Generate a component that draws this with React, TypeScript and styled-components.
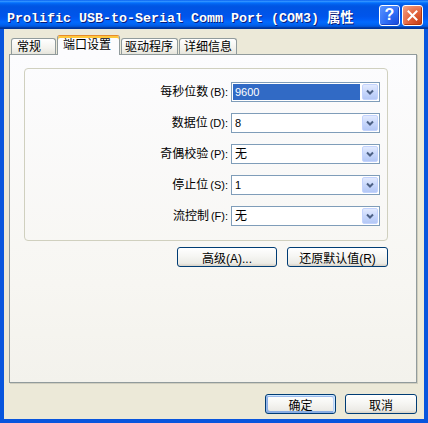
import React from "react";
import styled, { createGlobalStyle, css } from "styled-components";

const GlobalStyle = createGlobalStyle`
  html, body { margin: 0; padding: 0; background: #ECE9D8; }
  body {
    font-family: "Liberation Sans", "Noto Sans CJK SC", sans-serif;
    font-size: 12px;
    color: #000;
  }
  * { box-sizing: border-box; }
`;

const Window = styled.div`
  width: 428px;
  height: 423px;
  display: flex;
  flex-direction: column;
  overflow: hidden;
`;

const TitleBar = styled.div`
  height: 29px;
  flex: none;
  display: flex;
  align-items: center;
  padding: 1px 5px 0 7px;
  background: linear-gradient(
    180deg,
    #0058ee 0%,
    #3593ff 4%,
    #288eff 6%,
    #127dff 8%,
    #036ffc 10%,
    #0262ee 14%,
    #0057e5 20%,
    #0054e3 24%,
    #0055eb 56%,
    #005bf5 66%,
    #026afe 76%,
    #0062ef 86%,
    #0052d6 92%,
    #0040ab 94%,
    #003092 100%
  );
`;

const TitleText = styled.div`
  flex: 1;
  color: #fff;
  font-family: "Liberation Mono", "Noto Sans CJK SC", monospace;
  font-weight: bold;
  font-size: 13.33px;
  white-space: nowrap;
  text-shadow: 1px 1px #0a1c7a;
  padding-top: 2px;
`;

const CaptionButtons = styled.div`
  display: flex;
  gap: 2px;
`;

const CaptionButton = styled.div<{ $kind: "help" | "close" }>`
  width: 21px;
  height: 21px;
  border: 1px solid #fff;
  border-radius: 3px;
  display: flex;
  align-items: center;
  justify-content: center;
  color: #fff;
  font-family: "Liberation Sans", sans-serif;
  font-weight: bold;
  font-size: 16px;
  ${(p) =>
    p.$kind === "help"
      ? css`
          background: radial-gradient(circle at 85% 90%, #1b4fe0 0%, #2f6ef6 45%, #5c95ff 100%);
          box-shadow: inset -1px -1px 0 #1a44c8;
        `
      : css`
          background: radial-gradient(circle at 85% 90%, #c8421b 0%, #e2613a 45%, #f2a58a 100%);
          box-shadow: inset -1px -1px 0 #b0380f;
        `}
`;

const Body = styled.div`
  flex: 1;
  display: flex;
  flex-direction: column;
  background: #ece9d8;
  border: 4px solid #0855dd;
  border-top: none;
  padding: 5px 7px 0 5px;
`;

const TabStrip = styled.div`
  height: 20px;
  flex: none;
  display: flex;
  align-items: flex-end;
  gap: 1px;
  padding-left: 2px;
  position: relative;
  z-index: 1;
`;

const Tab = styled.div<{ $active?: boolean; $w: number; $pl: number }>`
  width: ${(p) => p.$w}px;
  padding-left: ${(p) => p.$pl}px;
  border: 1px solid #919b9c;
  border-bottom: none;
  border-radius: 3px 3px 0 0;
  white-space: nowrap;
  font-size: 12px;
  ${(p) =>
    p.$active
      ? css`
          height: 20px;
          margin-bottom: -1px;
          background: #fcfcfe;
          border-top-color: #e68b2c;
          box-shadow: inset 0 2px 0 #ffc83c;
          line-height: 18px;
          padding-top: 0;
        `
      : css`
          height: 16px;
          background: linear-gradient(180deg, #ffffff 0%, #f4f3ee 60%, #e6e5dc 100%);
          line-height: 17px;
        `}
`;

const Panel = styled.div`
  width: 408px;
  height: 329px;
  flex: none;
  border: 1px solid #919b9c;
  background: linear-gradient(180deg, #fcfcfe 0%, #f7f6f2 70%, #f3f2ec 100%);
  box-shadow: 1px 1px 0 #d0cebf;
  padding: 13px 0 0 14px;
`;

const Frame = styled.div`
  width: 364px;
  height: 173px;
  border: 1px solid #d0d0bf;
  border-radius: 4px;
  padding-top: 13px;
  display: grid;
  grid-template-columns: 203px 149px;
  column-gap: 3px;
  row-gap: 11px;
  align-content: start;
`;

const Label = styled.div`
  text-align: right;
  line-height: 20px;
  height: 20px;
  white-space: nowrap;
  font-size: 12px;
`;

const Key = styled.span`
  margin-left: 2px;
  font-size: 11px;
`;

const Combo = styled.div`
  height: 20px;
  border: 1px solid #7f9db9;
  background: #fff;
  display: flex;
  align-items: center;
  padding: 1px;
`;

const ComboValue = styled.div<{ $selected?: boolean }>`
  flex: 1;
  height: 16px;
  line-height: 16px;
  padding-left: 2px;
  margin-right: 2px;
  font-size: 11px;
  white-space: nowrap;
  ${(p) =>
    p.$selected &&
    css`
      background: #316ac5;
      color: #fff;
    `}
`;

const CjkValue = styled.span`
  font-size: 12px;
`;

const DropButton = styled.div`
  width: 16px;
  height: 16px;
  flex: none;
  border: 1px solid #c3d3fd;
  border-radius: 2px;
  background: linear-gradient(180deg, #e2eafe 0%, #c6d6fb 55%, #b4c8f6 100%);
  display: flex;
  align-items: center;
  justify-content: center;
`;

const ButtonRow = styled.div<{ $gap: number; $mt: number }>`
  display: flex;
  justify-content: flex-end;
  gap: ${(p) => p.$gap}px;
  margin-top: ${(p) => p.$mt}px;
`;

const InnerRow = styled(ButtonRow)`
  width: 364px;
`;

const XPButton = styled.div<{ $w: number; $default?: boolean }>`
  width: ${(p) => p.$w}px;
  height: 20px;
  border: 1px solid #003c74;
  border-radius: 3px;
  background: linear-gradient(180deg, #ffffff 0%, #f6f6f3 45%, #ecebe6 85%, #d6d0c5 100%);
  display: flex;
  align-items: center;
  justify-content: center;
  font-size: 12px;
  white-space: nowrap;
  ${(p) =>
    p.$default &&
    css`
      box-shadow: inset -1px 1px #cee7ff, inset 1px 2px #98b8ea, inset -2px 2px #bcd4f6,
        inset 1px -1px #89ade4, inset 2px -2px #89ade4;
    `}
`;

const Chevron = () => (
  <svg width="8" height="6" viewBox="0 0 8 6">
    <polyline points="1,1.5 4,4.5 7,1.5" fill="none" stroke="#4d6185" strokeWidth="2" />
  </svg>
);

const CloseGlyph = () => (
  <svg width="11" height="11" viewBox="0 0 11 11">
    <path d="M1.5 1.5 L9.5 9.5 M9.5 1.5 L1.5 9.5" stroke="#fff" strokeWidth="2" strokeLinecap="square" />
  </svg>
);

type Row = { label: string; key: string; value: string; cjk?: boolean; selected?: boolean };

const rows: Row[] = [
  { label: "每秒位数", key: "(B):", value: "9600", selected: true },
  { label: "数据位", key: "(D):", value: "8" },
  { label: "奇偶校验", key: "(P):", value: "无", cjk: true },
  { label: "停止位", key: "(S):", value: "1" },
  { label: "流控制", key: "(F):", value: "无", cjk: true },
];

const tabs = [
  { text: "常规", w: 45, pl: 5 },
  { text: "端口设置", w: 63, pl: 5, active: true },
  { text: "驱动程序", w: 57, pl: 3 },
  { text: "详细信息", w: 58, pl: 4 },
];

export default function App() {
  return (
    <>
      <GlobalStyle />
      <Window>
        <TitleBar>
          <TitleText>Prolific USB-to-Serial Comm Port (COM3) 属性</TitleText>
          <CaptionButtons>
            <CaptionButton $kind="help">?</CaptionButton>
            <CaptionButton $kind="close">
              <CloseGlyph />
            </CaptionButton>
          </CaptionButtons>
        </TitleBar>
        <Body>
          <TabStrip>
            {tabs.map((t) => (
              <Tab key={t.text} $w={t.w} $pl={t.pl} $active={t.active}>
                {t.text}
              </Tab>
            ))}
          </TabStrip>
          <Panel>
            <Frame>
              {rows.map((r) => (
                <React.Fragment key={r.label}>
                  <Label>
                    {r.label}
                    <Key>{r.key}</Key>
                  </Label>
                  <Combo>
                    <ComboValue $selected={r.selected}>
                      {r.cjk ? <CjkValue>{r.value}</CjkValue> : r.value}
                    </ComboValue>
                    <DropButton>
                      <Chevron />
                    </DropButton>
                  </Combo>
                </React.Fragment>
              ))}
            </Frame>
            <InnerRow $gap={10} $mt={6}>
              <XPButton $w={100}>高级(A)...</XPButton>
              <XPButton $w={101}>还原默认值(R)</XPButton>
            </InnerRow>
          </Panel>
          <ButtonRow $gap={9} $mt={11}>
            <XPButton $w={71} $default>
              确定
            </XPButton>
            <XPButton $w={72}>取消</XPButton>
          </ButtonRow>
        </Body>
      </Window>
    </>
  );
}
